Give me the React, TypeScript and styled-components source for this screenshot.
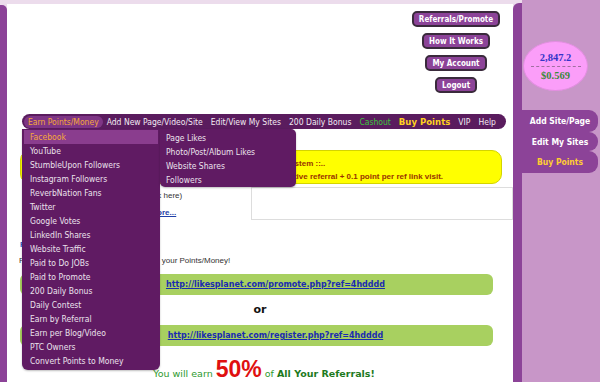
import React from "react";
import styled, { createGlobalStyle } from "styled-components";

const GlobalStyle = createGlobalStyle`
  body {
    margin: 0;
    overflow: hidden;
    font-family: "DejaVu Sans Condensed", "DejaVu Sans", sans-serif;
  }
`;

const earnItems = [
  "Facebook",
  "YouTube",
  "StumbleUpon Followers",
  "Instagram Followers",
  "ReverbNation Fans",
  "Twitter",
  "Google Votes",
  "LinkedIn Shares",
  "Website Traffic",
  "Paid to Do JOBs",
  "Paid to Promote",
  "200 Daily Bonus",
  "Daily Contest",
  "Earn by Referral",
  "Earn per Blog/Video",
  "PTC Owners",
  "Convert Points to Money",
];

const facebookItems = [
  "Page Likes",
  "Photo/Post/Album Likes",
  "Website Shares",
  "Followers",
];

const navItems: { label: string; tone: "active" | "normal" | "green" | "gold" }[] = [
  { label: "Earn Points/Money", tone: "active" },
  { label: "Add New Page/Video/Site", tone: "normal" },
  { label: "Edit/View My Sites", tone: "normal" },
  { label: "200 Daily Bonus", tone: "normal" },
  { label: "Cashout", tone: "green" },
  { label: "Buy Points", tone: "gold" },
  { label: "VIP", tone: "normal" },
  { label: "Help", tone: "normal" },
];

const App = () => {
  return (
    <Page>
      <GlobalStyle />
      <Frame>
        <LeftStrip />
        <Main>
          <Header>
            <ButtonColumn>
              <TopButton>Referrals/Promote</TopButton>
              <TopButton>How It Works</TopButton>
              <TopButton>My Account</TopButton>
              <TopButton>Logout</TopButton>
            </ButtonColumn>
          </Header>
          <NavBar>
            {navItems.map((n) => (
              <NavItem key={n.label} $tone={n.tone}>
                {n.label}
              </NavItem>
            ))}
            <Dropdown>
              {earnItems.map((item, i) => (
                <DropItem key={item} $active={i === 0}>
                  {item}
                  {i === 0 && (
                    <SubMenu>
                      {facebookItems.map((s) => (
                        <SubItem key={s}>{s}</SubItem>
                      ))}
                    </SubMenu>
                  )}
                </DropItem>
              ))}
            </Dropdown>
          </NavBar>
          <Content>
            <NoticeBox>
              <NoticeLine>.:: Our Unique Referral System ::..</NoticeLine>
              <NoticeLine>
                Earn 20% of all purchases by referrals + 50 points per active
                referral + 0.1 point per ref link visit.
              </NoticeLine>
            </NoticeBox>
            <InfoRow>
              <InfoText>
                <SmallLine>Share your links with your friends (click here)</SmallLine>
                <MoreLink>Learn more...</MoreLink>
              </InfoText>
              <EmptyBox />
            </InfoRow>
            <BlueMark>F</BlueMark>
            <SmallLine $pad={12} $top={5}>
              Promote the links everywhere to double your Points/Money!
            </SmallLine>
            <LinkBar $top={8}>
              <RefLink href="#">http://likesplanet.com/promote.php?ref=4hdddd</RefLink>
            </LinkBar>
            <OrText>or</OrText>
            <LinkBar>
              <RefLink href="#">http://likesplanet.com/register.php?ref=4hdddd</RefLink>
            </LinkBar>
            <EarnLine>
              You will earn <BigPercent>50%</BigPercent> of{" "}
              <strong>All Your Referrals!</strong>
            </EarnLine>
          </Content>
        </Main>
        <RightStrip />
      </Frame>
      <Sidebar>
        <StatsOval>
          <Points>2,847.2</Points>
          <DashLine />
          <Money>$0.569</Money>
        </StatsOval>
        <Tabs>
          <SideTab $h={22}>Add Site/Page</SideTab>
          <SideTab $h={19}>Edit My Sites</SideTab>
          <SideTab $h={22} $gold>
            Buy Points
          </SideTab>
        </Tabs>
      </Sidebar>
    </Page>
  );
};

const Page = styled.div`
  display: flex;
  width: 600px;
  height: 382px;
  overflow: hidden;
  background: #c896c8;
`;

const Frame = styled.div`
  display: flex;
  background: #ecdcec;
`;

const LeftStrip = styled.div`
  width: 7px;
  margin-top: 5px;
  background: #8c4398;
  border-top-right-radius: 5px;
`;

const RightStrip = styled.div`
  width: 9px;
  margin-top: 3px;
  background: #8c4398;
  border-top-left-radius: 6px;
`;

const Main = styled.div`
  width: 506px;
  margin-top: 4px;
  background: #ffffff;
  display: flex;
  flex-direction: column;
  overflow: hidden;
  & > * {
    flex-shrink: 0;
  }
`;

const Header = styled.div`
  height: 110px;
  display: flex;
  justify-content: flex-end;
  padding: 7px 7px 0 0;
  box-sizing: border-box;
`;

const ButtonColumn = styled.div`
  width: 100px;
  display: flex;
  flex-direction: column;
  align-items: center;
  gap: 6px;
`;

const TopButton = styled.div`
  height: 16px;
  box-sizing: border-box;
  padding: 0 5px;
  display: flex;
  align-items: center;
  background: #8c4398;
  border: 2px solid #3a2a3c;
  border-radius: 5px;
  color: #ffffff;
  font-size: 8px;
  font-weight: bold;
  white-space: nowrap;
`;

const NavBar = styled.div`
  position: relative;
  z-index: 5;
  height: 15px;
  margin: 0 7px 0 15px;
  padding: 0 6px 0 2px;
  display: flex;
  align-items: center;
  justify-content: space-between;
  background: #5a1c5e;
  border-radius: 8px;
`;

const NavItem = styled.span<{ $tone: "active" | "normal" | "green" | "gold" }>`
  font-size: ${(p) => (p.$tone === "gold" ? "9.5px" : "8.5px")};
  font-weight: ${(p) => (p.$tone === "gold" ? "bold" : "normal")};
  white-space: nowrap;
  line-height: 12px;
  padding: 0 4px;
  border-radius: 6px;
  background: ${(p) => (p.$tone === "active" ? "#7e3585" : "transparent")};
  color: ${(p) =>
    p.$tone === "active"
      ? "#f5a83a"
      : p.$tone === "green"
      ? "#3cc43c"
      : p.$tone === "gold"
      ? "#ffd21f"
      : "#f2eaf2"};
`;

const Dropdown = styled.div`
  position: absolute;
  top: 15px;
  left: 0;
  width: 138px;
  padding: 1px 0 2px;
  background: #601b63;
  border-radius: 0 0 6px 6px;
  box-shadow: 0 1px 2px rgba(0, 0, 0, 0.25);
`;

const DropItem = styled.div<{ $active?: boolean }>`
  position: relative;
  height: 14px;
  line-height: 14px;
  margin: 0 2px;
  padding-left: 6px;
  font-size: 8.5px;
  white-space: nowrap;
  color: ${(p) => (p.$active ? "#f5a83a" : "#ebe2ec")};
  background: ${(p) => (p.$active ? "#8a3d8e" : "transparent")};
`;

const SubMenu = styled.div`
  position: absolute;
  top: -1px;
  left: 136px;
  width: 136px;
  padding: 2px 0 0;
  background: #601b63;
  border-radius: 0 5px 5px 5px;
  box-shadow: 0 1px 2px rgba(0, 0, 0, 0.25);
`;

const SubItem = styled.div`
  height: 14px;
  line-height: 14px;
  padding-left: 6px;
  font-size: 8.5px;
  color: #ebe2ec;
`;

const Content = styled.div`
  display: flex;
  flex-direction: column;
`;

const NoticeBox = styled.div`
  height: 34px;
  box-sizing: border-box;
  margin: 21px 11px 0 13px;
  padding-top: 6px;
  text-align: center;
  background: #ffff00;
  border: 1px solid #d4d400;
  border-radius: 10px;
  font-family: "Liberation Sans", Arial, sans-serif;
`;

const NoticeLine = styled.div`
  font-size: 8px;
  font-weight: bold;
  line-height: 13px;
  color: #993300;
  white-space: nowrap;
`;

const InfoRow = styled.div`
  display: flex;
  margin-top: 3px;
`;

const InfoText = styled.div`
  width: 244px;
  padding-left: 16px;
  padding-top: 3px;
  box-sizing: border-box;
  overflow: hidden;
`;

const SmallLine = styled.div<{ $pad?: number; $top?: number }>`
  font-family: "Liberation Sans", Arial, sans-serif;
  font-size: 8px;
  line-height: 11px;
  color: #333333;
  margin-top: ${(p) => p.$top ?? 0}px;
  padding-left: ${(p) => p.$pad ?? 0}px;
  white-space: nowrap;
`;

const MoreLink = styled.div`
  margin-top: 7px;
  padding-left: 103px;
  font-family: "Liberation Sans", Arial, sans-serif;
  font-size: 8px;
  font-weight: bold;
  color: #1f3fa8;
  text-decoration: underline;
`;

const EmptyBox = styled.div`
  width: 262px;
  height: 33px;
  box-sizing: border-box;
  border: 1px solid #dddddd;
`;

const BlueMark = styled.div`
  margin: 20px 0 0 13px;
  font-family: "Liberation Sans", Arial, sans-serif;
  font-size: 8px;
  font-weight: bold;
  line-height: 10px;
  color: #2a5fc0;
`;

const LinkBar = styled.div<{ $top?: number }>`
  height: 21px;
  margin: ${(p) => p.$top ?? 0}px 20px 0 13px;
  padding-left: 38px;
  display: flex;
  align-items: center;
  justify-content: center;
  background: #a8d060;
  border-radius: 6px;
`;

const RefLink = styled.a`
  font-family: "DejaVu Sans", Verdana, sans-serif;
  font-size: 8px;
  font-weight: bold;
  color: #1a2cb0;
  text-decoration: underline;
`;

const OrText = styled.div`
  height: 30px;
  line-height: 30px;
  text-align: center;
  font-family: "DejaVu Sans", Verdana, sans-serif;
  font-size: 11px;
  font-weight: bold;
  color: #111111;
`;

const EarnLine = styled.div`
  margin-top: 10px;
  padding-left: 8px;
  text-align: center;
  font-family: "DejaVu Sans", Verdana, sans-serif;
  font-size: 9.5px;
  color: #2e9a2e;
  strong {
    color: #1d7a1d;
  }
`;

const BigPercent = styled.span`
  font-family: "Liberation Sans", Arial, sans-serif;
  font-size: 23px;
  font-weight: bold;
  color: #e01010;
`;

const Sidebar = styled.div`
  width: 78px;
  display: flex;
  flex-direction: column;
  padding-top: 41px;
  box-sizing: border-box;
`;

const StatsOval = styled.div`
  width: 65px;
  height: 50px;
  margin-left: 1px;
  box-sizing: border-box;
  display: flex;
  flex-direction: column;
  align-items: center;
  justify-content: center;
  gap: 3px;
  background: #fb9ef9;
  border: 1px solid #e28ee0;
  border-radius: 50%;
  font-family: "Liberation Serif", "Times New Roman", serif;
  font-weight: bold;
  font-size: 10.5px;
`;

const Points = styled.div`
  color: #3434c8;
`;

const Money = styled.div`
  color: #3b8a3b;
`;

const DashLine = styled.div`
  width: 50px;
  border-top: 1px dashed #a070a0;
`;

const Tabs = styled.div`
  margin-top: 19px;
  display: flex;
  flex-direction: column;
`;

const SideTab = styled.div<{ $h: number; $gold?: boolean }>`
  width: 76px;
  height: ${(p) => p.$h}px;
  display: flex;
  align-items: center;
  justify-content: center;
  background: #8c4398;
  border-radius: 0 9px 9px 0;
  color: ${(p) => (p.$gold ? "#ffcc33" : "#ffffff")};
  font-size: 8.5px;
  font-weight: bold;
`;

export default App;
